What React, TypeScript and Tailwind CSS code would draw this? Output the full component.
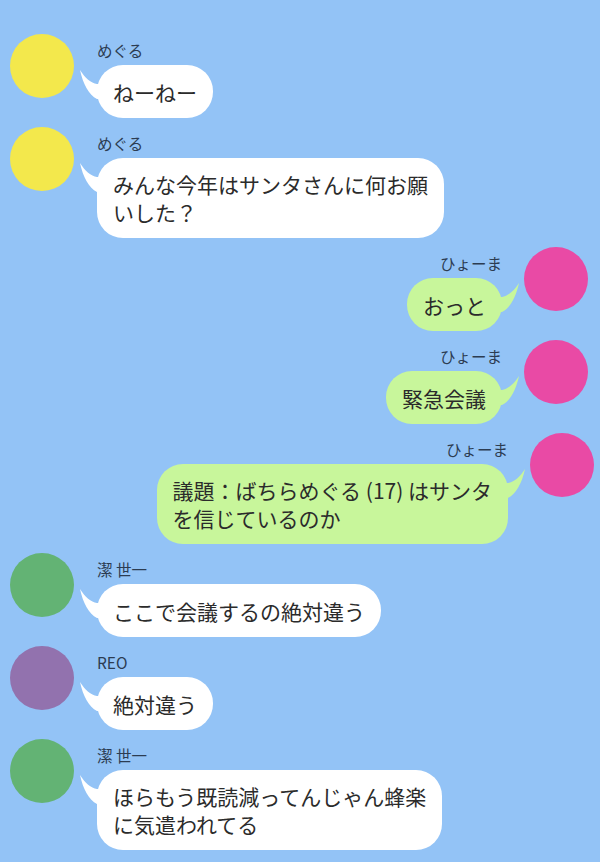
import React from "react";

type Msg = {
  side: "left" | "right";
  name: string;
  color: string;
  lines: string[];
  shift?: boolean;
};

const msgs: Msg[] = [
  { side: "left", name: "めぐる", color: "bg-[#f3e84c]", lines: ["ねーねー"] },
  { side: "left", name: "めぐる", color: "bg-[#f3e84c]", lines: ["みんな今年はサンタさんに何お願", "いした？"] },
  { side: "right", name: "ひょーま", color: "bg-[#e94aa5]", lines: ["おっと"] },
  { side: "right", name: "ひょーま", color: "bg-[#e94aa5]", lines: ["緊急会議"] },
  { side: "right", name: "ひょーま", color: "bg-[#e94aa5]", lines: ["議題：ばちらめぐる (17) はサンタ", "を信じているのか"], shift: true },
  { side: "left", name: "潔 世一", color: "bg-[#63b374]", lines: ["ここで会議するの絶対違う"] },
  { side: "left", name: "REO", color: "bg-[#9272ae]", lines: ["絶対違う"] },
  { side: "left", name: "潔 世一", color: "bg-[#63b374]", lines: ["ほらもう既読減ってんじゃん蜂楽", "に気遣われてる"] },
];

function Tail({ fill, right }: { fill: string; right?: boolean }) {
  return (
    <svg
      width="24"
      height="30"
      viewBox="0 0 24 30"
      className={right ? "absolute right-[-18px] top-[4px] -scale-x-100" : "absolute left-[-18px] top-[4px]"}
    >
      <path d="M1,1 C6,9 12,14 18,15 L24,15 L24,30 L18,30 C10,26 4,15 1,1 Z" fill={fill} />
    </svg>
  );
}

function Bubble({ m }: { m: Msg }) {
  const right = m.side === "right";
  return (
    <div
      className={
        "relative min-h-[53px] flex items-center rounded-[26px] px-4 py-3 text-[21px] leading-[28px] text-[#2b2b2b] whitespace-nowrap " +
        (right ? "bg-[#c8f69b]" : "bg-white")
      }
    >
      <Tail fill={right ? "#c8f69b" : "#ffffff"} right={right} />
      <span className="relative">
        {m.lines.map((l, i) => (
          <React.Fragment key={i}>
            {i > 0 && <br />}
            {l}
          </React.Fragment>
        ))}
      </span>
    </div>
  );
}

export default function App() {
  return (
    <div
      className="w-[600px] h-[862px] overflow-hidden bg-[#93c3f6] pt-[34px] flex flex-col gap-[9px]"
      style={{ fontFamily: '"Noto Sans CJK JP", "Noto Sans", sans-serif' }}
    >
      {msgs.map((m, i) =>
        m.side === "left" ? (
          <div key={i} className="flex items-start pl-[10px]">
            <div className={"w-[64px] h-[64px] rounded-full shrink-0 " + m.color} />
            <div className="ml-[23px] flex flex-col items-start">
              <div className="mt-[6px] text-[15.5px] leading-5 text-[#2c3c52]">{m.name}</div>
              <div className="mt-[5px]">
                <Bubble m={m} />
              </div>
            </div>
          </div>
        ) : (
          <div key={i} className={"flex items-start justify-end " + (m.shift ? "pr-[6px]" : "pr-[12px]")}>
            <div className="mr-[22px] flex flex-col items-end">
              <div className="mt-[6px] text-[15.5px] leading-5 text-[#2c3c52]">{m.name}</div>
              <div className="mt-[5px]">
                <Bubble m={m} />
              </div>
            </div>
            <div className={"w-[64px] h-[64px] rounded-full shrink-0 " + m.color} />
          </div>
        )
      )}
    </div>
  );
}
